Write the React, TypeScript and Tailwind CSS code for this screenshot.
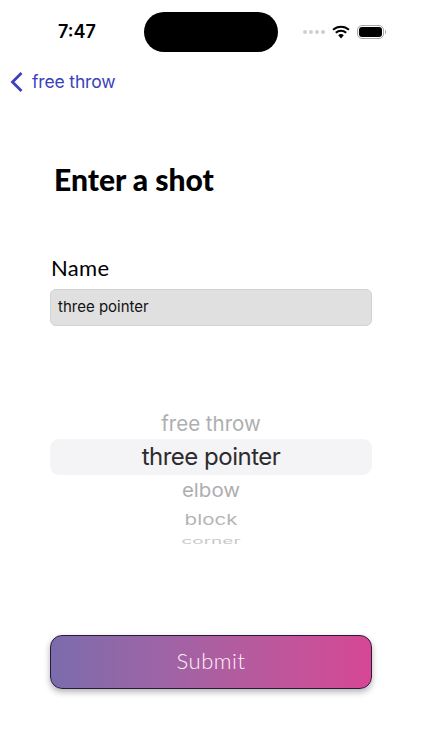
const sans = 'font-["Inter","Liberation_Sans",sans-serif]';
const avenir = 'font-["Lato","Open_Sans",sans-serif]';

function StatusIcons() {
  return (
    <div className="flex items-center">
      <div className="flex gap-[2px]">
        <span className="h-[4px] w-[4px] rounded-full bg-[#cfcfcf]" />
        <span className="h-[4px] w-[4px] rounded-full bg-[#cfcfcf]" />
        <span className="h-[4px] w-[4px] rounded-full bg-[#cfcfcf]" />
        <span className="h-[4px] w-[4px] rounded-full bg-[#cfcfcf]" />
      </div>
      <svg className="ml-[7px]" width="18" height="14" viewBox="0 0 18 14" fill="none">
        <path d="M1 4.8C5.6 0.6 12.4 0.6 17 4.8" stroke="#000" strokeWidth="2" />
        <path d="M3.8 7.8C6.8 5 11.2 5 14.2 7.8" stroke="#000" strokeWidth="2" />
        <path d="M6.2 10.2L9 13.4L11.8 10.2C10.2 8.7 7.8 8.7 6.2 10.2Z" fill="#000" />
      </svg>
      <div className="ml-[7px] flex h-[14px] w-[27px] items-center justify-center rounded-[5px] border border-[#a8a8a8]">
        <div className="h-[10px] w-[23px] rounded-[3px] bg-black" />
      </div>
      <div className="ml-[1px] h-[4px] w-[1px] rounded-r bg-[#a8a8a8]" />
    </div>
  );
}

export default function App() {
  return (
    <div className={`flex h-[750px] w-[422px] flex-col overflow-hidden bg-white ${sans}`}>
      {/* status bar */}
      <div className="flex h-[52px] shrink-0 items-end">
        <div className="flex h-[40px] w-full items-center">
          <span className="ml-[58px] w-[86px] text-[18px] font-semibold leading-none text-black">7:47</span>
          <div className="h-[40px] w-[134px] rounded-[20px] bg-black" />
          <div className="ml-[25px]">
            <StatusIcons />
          </div>
        </div>
      </div>

      {/* nav */}
      <div className="mt-[17px] flex h-[26px] shrink-0 items-center pl-[10px] text-[#3a41bd]">
        <svg width="14" height="22" viewBox="0 0 14 22" fill="none">
          <path d="M11.5 2L2.5 11L11.5 20" stroke="currentColor" strokeWidth="2.8" />
        </svg>
        <span className="ml-[8px] text-[17.5px] tracking-[-0.15px] leading-none">free throw</span>
      </div>

      <h1 className={`ml-[54px] mt-[66px] text-[30px] font-black leading-[36px] text-black ${avenir}`}>Enter a shot</h1>

      {/* name field */}
      <div className="mx-[50px] mt-[57px] flex flex-col">
        <label className={`ml-[1px] text-[22px] tracking-[0.3px] leading-[28px] text-black ${avenir}`}>Name</label>
        <div className="mt-[7px] flex h-[37px] items-center rounded-[6px] border border-[#d2d2d2] bg-[#e0e0e0] px-[7px] text-[15px] text-[#111]">
          three pointer
        </div>
      </div>

      {/* wheel picker */}
      <div className="mx-[50px] mt-[84px] flex flex-col items-center">
        <div className="-mt-[1px] h-[30px] text-[20.5px] leading-[29px] text-[#aeaeb0]">free throw</div>
        <div className="flex h-[36px] w-full items-center justify-center rounded-[9px] bg-[#f4f4f6] text-[24px] tracking-[-0.5px] text-[#2c2c2e]">
          three pointer
        </div>
        <div className="mt-[2px] h-[28px] origin-center scale-y-[0.92] text-[20.5px] leading-[28px] text-[#aeaeb0]">elbow</div>
        <div className="mt-[1px] h-[28px] origin-center scale-y-[0.72] text-[20.5px] leading-[28px] text-[#b4b4b6]">block</div>
        <div className="-mt-[3px] h-[20px] origin-center scale-y-[0.42] text-[19px] leading-[20px] text-[#c8c8ca]">corner</div>
      </div>

      {/* submit */}
      <button
        className={`ml-[50px] mr-[50px] mt-[84px] flex h-[54px] shrink-0 items-center justify-center rounded-[12px] border-[1.5px] border-[#2a1a38] bg-gradient-to-r from-[#7b6cad] to-[#d64694] pb-[3px] text-[22px] font-light tracking-[0.5px] text-[#fdf2fa] shadow-[0_3px_6px_rgba(0,0,0,0.3)] ${avenir}`}
      >
        Submit
      </button>
    </div>
  );
}
